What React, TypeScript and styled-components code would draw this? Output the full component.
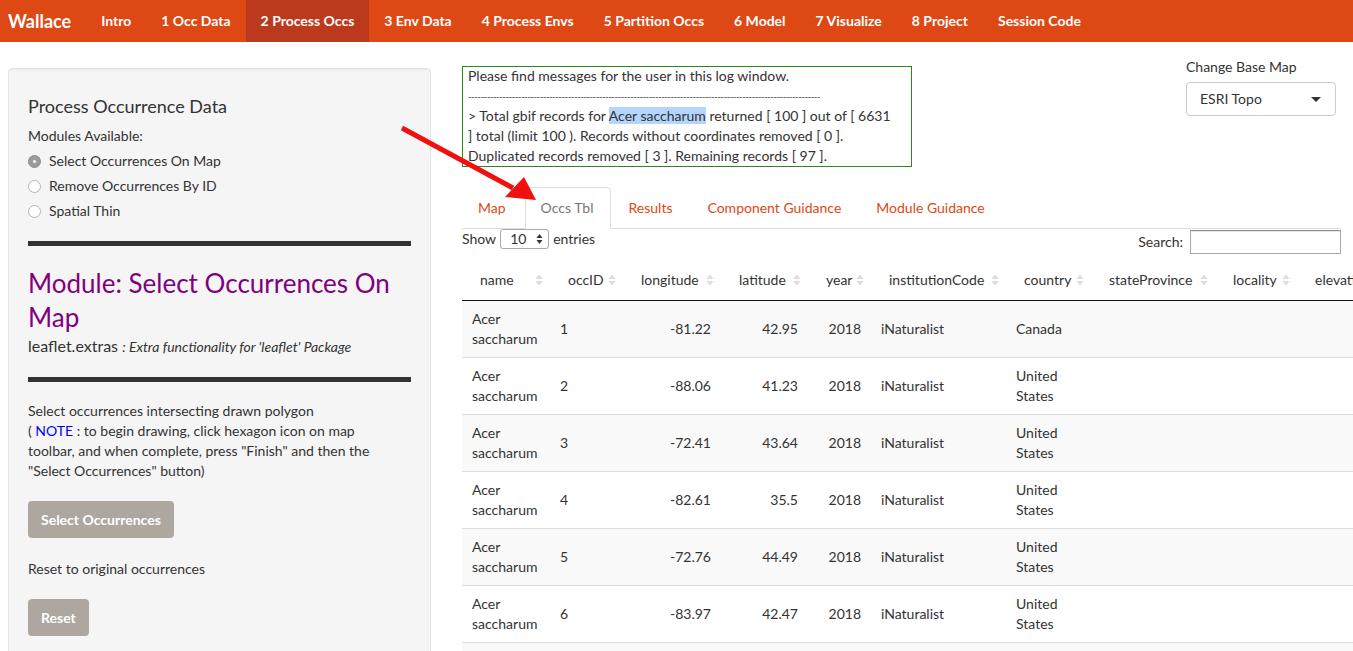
import React from 'react';
import styled, { createGlobalStyle } from 'styled-components';

const GlobalStyle = createGlobalStyle`
  html, body { margin: 0; padding: 0; background: #fff; overflow: hidden; }
  body {
    font-family: Lato, "Open Sans", sans-serif;
    font-size: 14px;
    line-height: 20px;
    color: #333;
  }
  * { box-sizing: border-box; }
`;

const Page = styled.div`
  position: relative;
  width: 1353px;
  height: 651px;
  overflow: hidden;
`;

const NavBar = styled.nav`
  display: flex;
  height: 42px;
  background: #dd4814;
`;

const Brand = styled.div`
  padding: 0 15px 0 8px;
  font-size: 18px;
  font-weight: 700;
  line-height: 42px;
  color: #fff;
`;

const NavItem = styled.div<{ $active?: boolean }>`
  padding: 0 15px;
  line-height: 42px;
  color: #fff;
  font-weight: 700;
  white-space: nowrap;
  background: ${(p) => (p.$active ? '#bb3a1e' : 'transparent')};
`;

const Content = styled.div`
  display: flex;
  align-items: flex-start;
`;

const Sidebar = styled.aside`
  flex: none;
  width: 423px;
  margin: 26px 0 0 8px;
  padding: 19px 19px 40px;
  background: #f5f5f5;
  border: 1px solid #e3e3e3;
  border-radius: 4px;
  box-shadow: inset 0 1px 1px rgba(0, 0, 0, 0.05);
  display: flex;
  flex-direction: column;
  align-items: flex-start;
`;

const SideTitle = styled.h4`
  margin: 8px 0 10px;
  font-size: 18px;
  font-weight: 400;
  line-height: 20px;
`;

const FieldLabel = styled.div`
  margin-bottom: 5px;
`;

const RadioList = styled.div`
  display: flex;
  flex-direction: column;
  gap: 5px;
`;

const RadioRow = styled.label`
  display: flex;
  align-items: center;
  gap: 8px;
  line-height: 20px;
`;

const RadioDot = styled.span<{ $checked?: boolean }>`
  width: 13px;
  height: 13px;
  border-radius: 50%;
  flex: none;
  display: flex;
  align-items: center;
  justify-content: center;
  background: ${(p) => (p.$checked ? '#9b9b9b' : '#fff')};
  border: 1px solid ${(p) => (p.$checked ? '#8c8c8c' : '#b5b5b5')};
  &::after {
    content: '';
    width: 3px;
    height: 3px;
    border-radius: 50%;
    background: ${(p) => (p.$checked ? '#fff' : 'transparent')};
  }
`;

const ThickRule = styled.div`
  align-self: stretch;
  height: 5px;
  background: #333;
  margin: 20px 0;
`;

const ModuleTitle = styled.h3`
  margin: 0;
  font-size: 26px;
  font-weight: 400;
  line-height: 34px;
  color: #800080;
`;

const PackageLine = styled.div`
  margin-top: 2px;
  font-size: 16px;
  line-height: 20px;
  & em {
    font-size: 14px;
  }
`;

const Para = styled.p`
  margin: -1px 0 0;
  line-height: 20px;
`;

const Note = styled.span`
  color: #0000ff;
`;

const GreyButton = styled.button<{ $gap?: number }>`
  margin-top: ${(p) => p.$gap ?? 20}px;
  padding: 8px 13px;
  border: none;
  border-radius: 4px;
  background: #aea79f;
  color: #fff;
  font-family: inherit;
  font-size: 14px;
  font-weight: 700;
  line-height: 21px;
`;

const ResetText = styled.div`
  margin-top: 21px;
`;

const Main = styled.main`
  flex: none;
  width: 879px;
  margin-left: 31px;
  padding-top: 15px;
`;

const TopRow = styled.div`
  display: flex;
  justify-content: space-between;
  align-items: flex-start;
`;

const LogBox = styled.div`
  margin-top: 9px;
  width: 450px;
  border: 1px solid #2b8a1f;
  padding: 0 5px;
  line-height: 20px;
  & > div:first-child {
    margin-top: -1px;
  }
`;

const Dashes = styled.div`
  white-space: nowrap;
  overflow: hidden;
  width: 352px;
  font-size: 10px;
  color: #444;
  letter-spacing: -0.6px;
`;

const Highlight = styled.span`
  background: #b4d5fd;
`;

const BaseMap = styled.div`
  width: 150px;
  margin-right: 5px;
`;

const SelectBox = styled.div`
  margin-top: 5px;
  height: 34px;
  border: 1px solid #ccc;
  border-radius: 4px;
  display: flex;
  align-items: center;
  justify-content: space-between;
  padding: 0 14px 0 13px;
  background: #fff;
`;

const Caret = styled.span`
  width: 0;
  height: 0;
  border-left: 5px solid transparent;
  border-right: 5px solid transparent;
  border-top: 5px solid #333;
`;

const TabList = styled.div`
  margin-top: 20px;
  display: flex;
  border-bottom: 1px solid #ddd;
`;

const Tab = styled.div<{ $active?: boolean }>`
  margin: 0 2px -1px 0;
  padding: 10px 16px 10px 15px;
  line-height: 20px;
  border: 1px solid ${(p) => (p.$active ? '#ddd' : 'transparent')};
  border-bottom-color: transparent;
  border-radius: 4px 4px 0 0;
  background: ${(p) => (p.$active ? '#fff' : 'transparent')};
  color: ${(p) => (p.$active ? '#777' : '#dd4814')};
`;

const Controls = styled.div`
  display: flex;
  justify-content: space-between;
  align-items: flex-start;
  height: 25px;
`;

const LengthCtl = styled.div`
  display: flex;
  align-items: center;
  gap: 4px;
  height: 20px;
`;

const MiniSelect = styled.div`
  width: 49px;
  height: 20px;
  border: 1px solid #aaa;
  border-radius: 3px;
  display: flex;
  align-items: center;
  justify-content: space-between;
  padding: 0 5px 0 9px;
  background: #fff;
`;

const SearchCtl = styled.div`
  margin-top: 1px;
  display: flex;
  align-items: center;
  gap: 7px;
`;

const SearchInput = styled.div`
  width: 151px;
  height: 24px;
  border: 1px solid #a9a9a9;
  border-top-color: #8f8f8f;
  box-shadow: inset 0 1px 1px rgba(0, 0, 0, 0.1);
  background: #fff;
`;

const Table = styled.table`
  margin-top: 6px;
  width: 955px;
  table-layout: fixed;
  border-collapse: separate;
  border-spacing: 0;
`;

const Th = styled.th`
  padding: 10px 7px 10px 18px;
  font-weight: 400;
  text-align: left;
  border-bottom: 1px solid #111;
  white-space: nowrap;
`;

const ThInner = styled.div`
  display: flex;
  align-items: center;
  gap: 3px;
  overflow: hidden;
`;

const SortSvg = styled.svg`
  flex: none;
  margin-left: auto;
`;

const Tr = styled.tr<{ $odd?: boolean; $first?: boolean }>`
  background: ${(p) => (p.$odd ? '#f9f9f9' : '#fff')};
  & > td {
    border-top: ${(p) => (p.$first ? 'none' : '1px solid #ddd')};
  }
`;

const Td = styled.td<{ $right?: boolean }>`
  padding: 8px 10px;
  line-height: 20px;
  vertical-align: middle;
  text-align: ${(p) => (p.$right ? 'right' : 'left')};
`;

const ArrowSvg = styled.svg`
  position: absolute;
  left: 395px;
  top: 120px;
  pointer-events: none;
`;

const SortIcon = () => (
  <SortSvg width="8" height="14" viewBox="0 0 8 14">
    <polygon points="0.5,6 4,1.5 7.5,6" fill="#dcdcdc" />
    <polygon points="0.5,8 4,12.5 7.5,8" fill="#dcdcdc" />
  </SortSvg>
);

const Spinner = () => (
  <svg width="7" height="12" viewBox="0 0 7 12">
    <polygon points="0.5,5 3.5,1 6.5,5" fill="#333" />
    <polygon points="0.5,7 3.5,11 6.5,7" fill="#333" />
  </svg>
);

const navItems = [
  'Intro',
  '1 Occ Data',
  '2 Process Occs',
  '3 Env Data',
  '4 Process Envs',
  '5 Partition Occs',
  '6 Model',
  '7 Visualize',
  '8 Project',
  'Session Code',
];

const columns = [
  { name: 'name', w: 88 },
  { name: 'occID', w: 73 },
  { name: 'longitude', w: 98 },
  { name: 'latitude', w: 87 },
  { name: 'year', w: 63 },
  { name: 'institutionCode', w: 135 },
  { name: 'country', w: 85 },
  { name: 'stateProvince', w: 124 },
  { name: 'locality', w: 82 },
  { name: 'elevation', w: 120 },
];

const rows = [
  { id: 1, lon: '-81.22', lat: '42.95', country: 'Canada' },
  { id: 2, lon: '-88.06', lat: '41.23', country: 'United States' },
  { id: 3, lon: '-72.41', lat: '43.64', country: 'United States' },
  { id: 4, lon: '-82.61', lat: '35.5', country: 'United States' },
  { id: 5, lon: '-72.76', lat: '44.49', country: 'United States' },
  { id: 6, lon: '-83.97', lat: '42.47', country: 'United States' },
  { id: 7, lon: '-79.38', lat: '43.65', country: 'Canada' },
];

export default function App() {
  return (
    <Page>
      <GlobalStyle />
      <NavBar>
        <Brand>Wallace</Brand>
        {navItems.map((n, i) => (
          <NavItem key={n} $active={i === 2}>
            {n}
          </NavItem>
        ))}
      </NavBar>
      <Content>
        <Sidebar>
          <SideTitle>Process Occurrence Data</SideTitle>
          <FieldLabel>Modules Available:</FieldLabel>
          <RadioList>
            <RadioRow>
              <RadioDot $checked />
              Select Occurrences On Map
            </RadioRow>
            <RadioRow>
              <RadioDot />
              Remove Occurrences By ID
            </RadioRow>
            <RadioRow>
              <RadioDot />
              Spatial Thin
            </RadioRow>
          </RadioList>
          <ThickRule />
          <ModuleTitle>Module: Select Occurrences On Map</ModuleTitle>
          <PackageLine>
            leaflet.extras <em>: Extra functionality for 'leaflet' Package</em>
          </PackageLine>
          <ThickRule />
          <Para>
            Select occurrences intersecting drawn polygon
            <br />( <Note>NOTE</Note> : to begin drawing, click hexagon icon on map
            <br />
            toolbar, and when complete, press "Finish" and then the
            <br />
            "Select Occurrences" button)
          </Para>
          <GreyButton>Select Occurrences</GreyButton>
          <ResetText>Reset to original occurrences</ResetText>
          <GreyButton $gap={20}>Reset</GreyButton>
        </Sidebar>
        <Main>
          <TopRow>
            <LogBox>
              <div>Please find messages for the user in this log window.</div>
              <Dashes>{'-'.repeat(120)}</Dashes>
              <div>
                &gt; Total gbif records for <Highlight>Acer saccharum</Highlight> returned [ 100 ] out of [ 6631
                <br />] total (limit 100 ). Records without coordinates removed [ 0 ].
                <br />
                Duplicated records removed [ 3 ]. Remaining records [ 97 ].
              </div>
            </LogBox>
            <BaseMap>
              <div>Change Base Map</div>
              <SelectBox>
                <span>ESRI Topo</span>
                <Caret />
              </SelectBox>
            </BaseMap>
          </TopRow>
          <TabList>
            <Tab>Map</Tab>
            <Tab $active>Occs Tbl</Tab>
            <Tab>Results</Tab>
            <Tab>Component Guidance</Tab>
            <Tab>Module Guidance</Tab>
          </TabList>
          <Controls>
            <LengthCtl>
              <span>Show</span>
              <MiniSelect>
                <span>10</span>
                <Spinner />
              </MiniSelect>
              <span>entries</span>
            </LengthCtl>
            <SearchCtl>
              <span>Search:</span>
              <SearchInput />
            </SearchCtl>
          </Controls>
          <Table>
            <colgroup>
              {columns.map((c) => (
                <col key={c.name} style={{ width: c.w }} />
              ))}
            </colgroup>
            <thead>
              <tr>
                {columns.map((c) => (
                  <Th key={c.name}>
                    <ThInner>
                      <span>{c.name}</span>
                      <SortIcon />
                    </ThInner>
                  </Th>
                ))}
              </tr>
            </thead>
            <tbody>
              {rows.map((r, i) => (
                <Tr key={r.id} $odd={i % 2 === 0} $first={i === 0}>
                  <Td>Acer saccharum</Td>
                  <Td>{r.id}</Td>
                  <Td $right>{r.lon}</Td>
                  <Td $right>{r.lat}</Td>
                  <Td $right>2018</Td>
                  <Td>iNaturalist</Td>
                  <Td>{r.country}</Td>
                  <Td />
                  <Td />
                  <Td />
                </Tr>
              ))}
            </tbody>
          </Table>
        </Main>
      </Content>
      <ArrowSvg width="150" height="90" viewBox="0 0 150 90">
        <line x1="7" y1="8" x2="118" y2="68" stroke="#f20f0f" strokeWidth="5" />
        <polygon points="141,80 110,77 129,57" fill="#f20f0f" />
      </ArrowSvg>
    </Page>
  );
}
